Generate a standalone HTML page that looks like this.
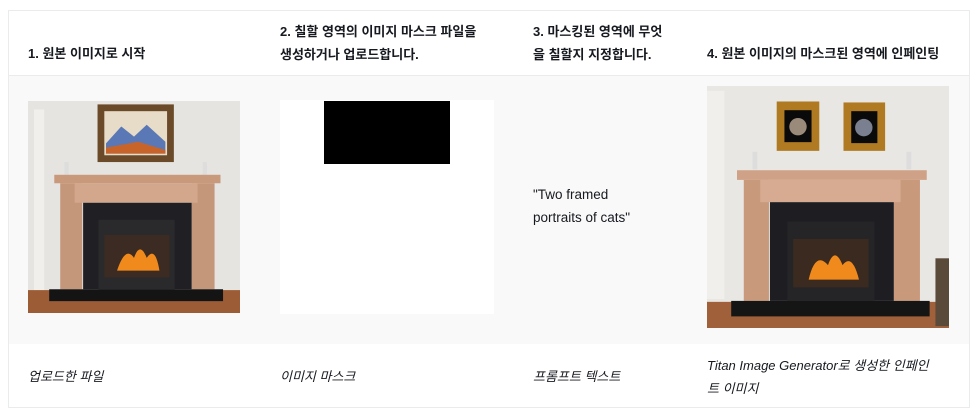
<!DOCTYPE html><html><head><meta charset="utf-8"><style>
body{margin:0;background:#fff;font-family:"Liberation Sans","Noto Sans CJK KR",sans-serif;color:#16191f}
.t{position:absolute;left:8px;top:10px;width:962px;height:398px;border:1px solid #e9ebed;box-sizing:border-box}
.r2{position:absolute;left:9px;top:75px;width:960px;height:268px;background:#f9f9f9;border-top:1px solid #e9ebed}
.h{position:absolute;font-size:13px;font-weight:bold;line-height:23px;word-break:break-all}
.f{position:absolute;font-size:13px;font-style:italic;line-height:23px;word-break:break-all}
.p{position:absolute;font-size:13.5px;line-height:23px}
svg{position:absolute}
</style></head><body>
<div class="t"></div><div class="r2"></div>
<div class="h" style="left:28px;top:42px">1. 원본 이미지로 시작</div>
<div class="h" style="left:280px;top:20px;width:205px">2. 칠할 영역의 이미지 마스크 파일을 생성하거나 업로드합니다.</div>
<div class="h" style="left:533px;top:20px;width:138px">3. 마스킹된 영역에 무엇을 칠할지 지정합니다.</div>
<div class="h" style="left:707px;top:42px">4. 원본 이미지의 마스크된 영역에 인페인팅</div>
<svg style="left:28px;top:101px" width="212" height="212" viewBox="0 0 250 250" preserveAspectRatio="none">
<rect width="250" height="250" fill="#e6e4e0"/><rect x="7" y="10" width="12" height="215" fill="#f0efec"/>
<rect y="223" width="250" height="27" fill="#9c5c36"/>
<rect x="82" y="4" width="90" height="68" fill="#6b4a2a"/><rect x="90" y="12" width="74" height="52" fill="#e7dcc8"/>
<path d="M92 50 L110 30 L125 42 L140 28 L162 48 L162 62 L92 62Z" fill="#5a78b5"/><path d="M92 55 L130 48 L162 58 L162 62 L92 62Z" fill="#c8642a"/>
<rect x="43" y="72" width="5" height="15" fill="#ddd"/><rect x="206" y="72" width="5" height="15" fill="#ddd"/>
<rect x="31" y="87" width="196" height="10" fill="#c9997c"/><rect x="38" y="97" width="26" height="125" fill="#c4977b"/><rect x="193" y="97" width="27" height="125" fill="#c4977b"/><rect x="55" y="97" width="145" height="23" fill="#d3a78c"/>
<rect x="65" y="120" width="128" height="102" fill="#1f1f24"/><rect x="83" y="140" width="90" height="82" fill="#2a2a2c"/><rect x="90" y="158" width="77" height="50" fill="#3b2b22"/>
<path d="M105 200 Q115 170 125 185 Q132 165 140 185 Q150 170 155 200Z" fill="#f08a1c"/>
<rect x="25" y="222" width="205" height="14" fill="#141414"/></svg>
<svg style="left:280px;top:100px" width="214" height="214"><rect width="214" height="214" fill="#fff"/><rect x="44" y="1" width="126" height="63" fill="#000"/></svg>
<div class="p" style="left:533px;top:183px;width:115px">"Two framed portraits of cats"</div>
<svg style="left:707px;top:86px" width="242" height="242" viewBox="0 0 250 250" preserveAspectRatio="none">
<rect width="250" height="250" fill="#e9e7e3"/><rect x="0" y="5" width="18" height="215" fill="#f0efec"/>
<rect y="223" width="250" height="27" fill="#a0603a"/><rect x="236" y="178" width="14" height="70" fill="#5a4a3a"/>
<rect x="72" y="16" width="44" height="51" fill="#b07a22"/><rect x="80" y="25" width="28" height="33" fill="#0a0a0a"/><circle cx="94" cy="42" r="9" fill="#9a8a7a"/>
<rect x="141" y="17" width="43" height="50" fill="#b07a22"/><rect x="149" y="26" width="27" height="33" fill="#0a0a0a"/><circle cx="162" cy="43" r="9" fill="#7a8090"/>
<rect x="47" y="68" width="5" height="18" fill="#ddd"/><rect x="206" y="68" width="5" height="18" fill="#ddd"/>
<rect x="31" y="87" width="196" height="10" fill="#cfa186"/><rect x="38" y="97" width="26" height="125" fill="#c9997c"/><rect x="193" y="97" width="27" height="125" fill="#c9997c"/><rect x="55" y="97" width="145" height="23" fill="#d7ab91"/>
<rect x="65" y="120" width="128" height="102" fill="#1e1e22"/><rect x="83" y="140" width="90" height="82" fill="#252527"/><rect x="89" y="158" width="78" height="50" fill="#3a2a20"/>
<path d="M105 200 Q112 170 125 185 Q132 165 140 185 Q150 172 157 200Z" fill="#f08a1c"/>
<rect x="25" y="222" width="205" height="16" fill="#151515"/></svg>
<div class="f" style="left:28px;top:365px">업로드한 파일</div>
<div class="f" style="left:280px;top:365px">이미지 마스크</div>
<div class="f" style="left:533px;top:365px">프롬프트 텍스트</div>
<div class="f" style="left:707px;top:354px;width:222px">Titan Image Generator로 생성한 인페인트 이미지</div>
</body></html>
